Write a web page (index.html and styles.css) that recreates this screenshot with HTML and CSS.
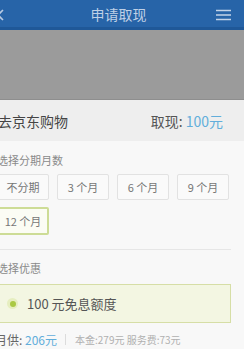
FILE: index.html
```html
<!DOCTYPE html>
<html lang="zh">
<head>
<meta charset="utf-8">
<link rel="stylesheet" href="styles.css">
</head>
<body>
<header class="topbar">
  <span class="back"><svg width="8" height="12" viewBox="0 0 8 12"><path d="M6 1 L1 6 L6 11" fill="none" stroke="#b9cbe3" stroke-width="1.6"/></svg></span>
  <span class="title">申请取现</span>
  <span class="menu"><svg width="15" height="12" viewBox="0 0 15 12"><path d="M0 1.5H15M0 6H15M0 10.5H15" stroke="#c3d3e8" stroke-width="1.6"/></svg></span>
</header>
<div class="shade"></div>
<div class="inforow">
  <span class="shop">去京东购物</span>
  <span class="amount">取现: <em>100元</em></span>
</div>
<main class="panel">
  <div class="content">
    <div class="label">选择分期月数</div>
    <div class="periods">
      <div class="period">不分期</div>
      <div class="period">3 个月</div>
      <div class="period">6 个月</div>
      <div class="period">9 个月</div>
      <div class="period selected">12 个月</div>
    </div>
    <div class="divider"></div>
    <div class="label">选择优惠</div>
    <div class="offer">
      <span class="radio"><span class="dot"></span></span>
      <span class="offer-text">100 元免息额度</span>
    </div>
    <div class="summary">
      <span class="monthly">月供: <em>206元</em></span>
      <span class="vsep"></span>
      <span class="detail">本金:279元 服务费:73元</span>
    </div>
  </div>
</main>
</body>
</html>
```

FILE: styles.css
```css
* { box-sizing: border-box; margin: 0; padding: 0; }
html, body { width: 244px; height: 349px; overflow: hidden; }
body {
  font-family: "Noto Sans CJK SC", "Noto Sans", sans-serif;
  background: #f8f8f8;
}
em { font-style: normal; }

.topbar {
  height: 30px;
  background: #2764a8;
  border-bottom: 3px solid #1f5898;
  display: flex;
  align-items: center;
  position: relative;
}
.back { position: absolute; left: -3px; top: 9px; display: flex; }
.title {
  flex: 1;
  text-align: center;
  font-size: 14px;
  color: #bfd0e6;
  margin-left: -7px;
  line-height: 1;
}
.menu { position: absolute; left: 216px; top: 9px; display: flex; }

.shade {
  height: 70px;
  background: #9b9b9b;
  border-bottom: 1px solid #8e8e8e;
}

.inforow {
  height: 41px;
  background: #eeeeee;
  display: flex;
  align-items: center;
  justify-content: space-between;
  padding: 0 21px 0 0;
  margin-left: -2px;
  font-size: 14px;
  color: #444;
}
.amount { color: #555; }
.amount em { color: #62aedb; }

.panel { background: #f8f8f8; padding-top: 10px; }
.content { margin: 0 13px 0 -3px; }

.label {
  font-size: 11px;
  line-height: 18px;
  color: #8a8a8a;
}

.periods {
  margin-top: 5px;
  display: grid;
  grid-template-columns: repeat(4, 52px);
  column-gap: 8px;
  row-gap: 7px;
}
.period {
  height: 26px;
  border: 1px solid #e2e2e2;
  background: #fafafa;
  border-radius: 2px;
  display: flex;
  align-items: center;
  justify-content: center;
  font-size: 11px;
  color: #777;
}
.period.selected {
  height: 28px;
  border: 2px solid #cddc96;
  background: #fbfcf4;
  color: #777;
}

.divider {
  height: 1px;
  background: #e6e6e6;
  margin: 14px 0 9px;
}

.offer {
  margin-top: 7px;
  height: 39px;
  border: 1px solid #d6dea6;
  background: #f3f6e2;
  display: flex;
  align-items: center;
  padding-left: 9px;
  gap: 9px;
}
.radio {
  width: 11px;
  height: 11px;
  border-radius: 50%;
  background: #e6eec0;
  display: flex;
  align-items: center;
  justify-content: center;
}
.dot {
  width: 6px;
  height: 6px;
  border-radius: 50%;
  background: #aac944;
}
.offer-text {
  font-size: 13px;
  color: #555;
}

.summary {
  margin-top: 8px;
  margin-left: -2px;
  height: 16px;
  display: flex;
  align-items: center;
}
.monthly { font-size: 12px; color: #666; }
.monthly em { color: #62aedb; }
.vsep {
  width: 1px;
  height: 11px;
  background: #dcdcdc;
  margin: 0 9px 0 8px;
}
.detail { font-size: 10px; color: #b0b0b0; }
```
